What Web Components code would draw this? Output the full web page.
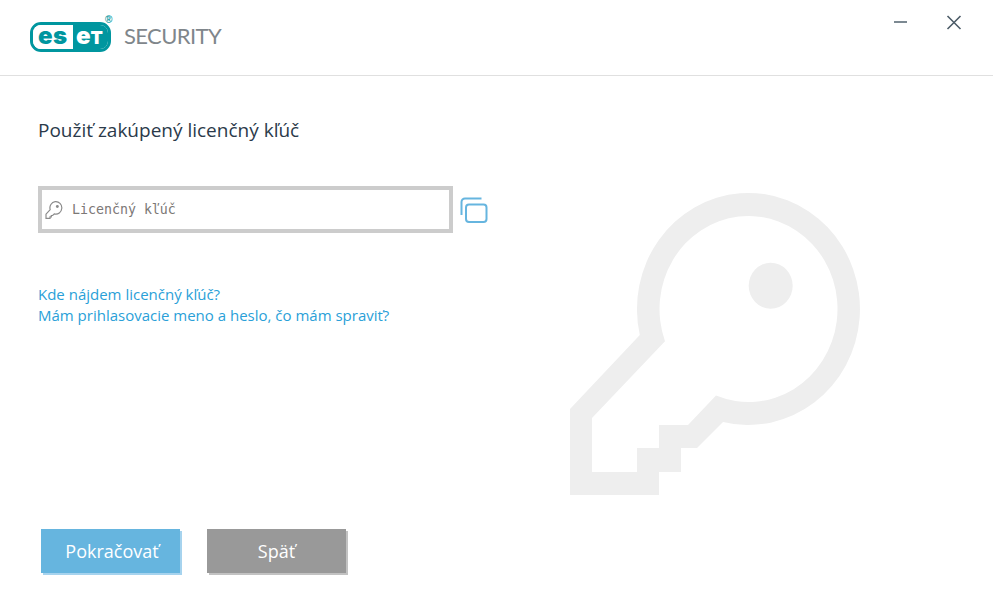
<!DOCTYPE html>
<html lang="sk">
<head>
<meta charset="utf-8">
<title>ESET Security</title>
<style>
  html, body { margin: 0; height: 100%; background: #fff; }
  body { font-family: "Open Sans", "Noto Sans", sans-serif; overflow: hidden; }
</style>
</head>
<body>
<license-page>
  <eset-header slot="header"></eset-header>
  <key-watermark slot="watermark"></key-watermark>
  <span slot="title">Použiť zakúpený licenčný kľúč</span>
  <license-field slot="field">Licenčný kľúč</license-field>
  <help-link slot="links">Kde nájdem licenčný kľúč?</help-link>
  <help-link slot="links">Mám prihlasovacie meno a heslo, čo mám spraviť?</help-link>
  <eset-button slot="actions" kind="primary">Pokračovať</eset-button>
  <eset-button slot="actions" kind="secondary">Späť</eset-button>
</license-page>

<script>
(function() {
  class LicensePage extends HTMLElement {
    constructor() {
      super();
      this.attachShadow({ mode: 'open' });
      this.shadowRoot.innerHTML = `
        <style>
          :host { display: block; position: relative; width: 993px; height: 616px; overflow: hidden; }
          main { display: flex; flex-direction: column; padding: 41px 0 0 38px; }
          h1 { margin: 0; font: 400 19px/26px "Open Sans", sans-serif; color: #2b3a4a; height: 26px; }
          .field { margin-top: 43px; }
          .links { display: flex; flex-direction: column; margin-top: 51px; }
          .actions { display: flex; gap: 27px; margin: 203px 0 0 3px; }
        </style>
        <slot name="watermark"></slot>
        <slot name="header"></slot>
        <main>
          <h1><slot name="title"></slot></h1>
          <div class="field"><slot name="field"></slot></div>
          <div class="links"><slot name="links"></slot></div>
          <div class="actions"><slot name="actions"></slot></div>
        </main>
      `;
    }
  }

  class EsetHeader extends HTMLElement {
    constructor() {
      super();
      this.attachShadow({ mode: 'open' });
      this.shadowRoot.innerHTML = `
        <style>
          :host { display: flex; align-items: flex-start; justify-content: space-between; height: 75px; border-bottom: 1px solid #e0e0e0; }
          .brand { display: flex; align-items: flex-start; margin: 22px 0 0 30px; position: relative; }
          .logo { display: flex; width: 81px; height: 30px; border-radius: 11px; overflow: hidden; box-sizing: border-box; border: 3px solid #00969f; font: 900 24px/21px Inter, "Liberation Sans", sans-serif; }
          .logo span { display: block; }
          .es { width: 40px; padding-left: 5px; box-sizing: border-box; color: #00969f; background: #fff; letter-spacing: .4px; }
          .et { flex: 1; padding-left: 3px; color: #fff; background: #00969f; }
          .et b { font-size: 18px; font-weight: 900; }
          .reg { position: absolute; left: 75px; top: -8px; font: 700 10px/12px "Liberation Sans", sans-serif; color: #00969f; }
          .name { margin: 0 0 0 13px; font: 400 22px/27px Lato, sans-serif; letter-spacing: -.6px; color: #7f868b; }
          .controls { display: flex; gap: 37px; margin: 15px 31px 0 0; }
          svg { display: block; }
        </style>
        <div class="brand">
          <div class="logo"><span class="es">es</span><span class="et">e<b>T</b></span></div>
          <span class="reg">®</span>
          <span class="name">SECURITY</span>
        </div>
        <div class="controls">
          <svg width="16" height="16" viewBox="0 0 16 16"><path d="M1 7h13" stroke="#5b6b76" stroke-width="1.6" fill="none"/></svg>
          <svg width="16" height="16" viewBox="0 0 16 16"><path d="M1.500 1l13 13M14.500 1l-13 13" stroke="#4d5c68" stroke-width="1.6" fill="none"/></svg>
        </div>
      `;
    }
  }

  class LicenseField extends HTMLElement {
    constructor() {
      super();
      this.attachShadow({ mode: 'open' });
      this.shadowRoot.innerHTML = `
        <style>
          :host { display: flex; align-items: center; gap: 7px; }
          .box { display: flex; align-items: center; gap: 9px; box-sizing: border-box; width: 415px; height: 47px; padding-left: 3px; border: 4px solid #ccc; background: #fff; }
          .text { font: 400 13.28px/16px "DejaVu Sans Mono", monospace; color: #7c7876; }
          svg { display: block; flex: none; }
        </style>
        <div class="box">
          <svg width="18" height="18" viewBox="570 193 290 302" fill="none" stroke="#8a8a8a" stroke-width="20">
            <path d="M651 339 581 413V484H648V460H670V436H693L720 408A100 104 0 1 0 651 339Z"/>
            <ellipse cx="771" cy="286" rx="24" ry="25" fill="#8a8a8a" stroke="none"/>
          </svg>
          <span class="text"><slot></slot></span>
        </div>
        <svg width="28" height="27" viewBox="0 0 28 27" fill="none" stroke="#66b5df" stroke-width="2">
          <path d="M21.500 2.500H5a3.500 3.500 0 0 0-3.500 3.500V19"/>
          <rect x="6" y="8.500" width="20.500" height="17.500" rx="3"/>
        </svg>
      `;
    }
  }

  class HelpLink extends HTMLElement {
    constructor() {
      super();
      this.attachShadow({ mode: 'open' });
      this.shadowRoot.innerHTML = `
        <style>
          :host { display: block; font: 400 15px/21px "Open Sans", sans-serif; color: #2a9fd8; cursor: pointer; }
        </style>
        <slot></slot>
      `;
    }
  }

  class EsetButton extends HTMLElement {
    static get observedAttributes() {
      return ['kind'];
    }

    constructor() {
      super();
      this.attachShadow({ mode: 'open' });
      this.shadowRoot.innerHTML = `
        <style>
          :host { display: flex; align-items: center; justify-content: center; box-sizing: border-box; width: 139px; height: 44px; font: 400 18px/24px "Open Sans", sans-serif; color: #fff; cursor: pointer; }
          :host([kind="primary"]) { background: #66b5df; box-shadow: 2px 2px 0 #a6d3ee; padding-left: 3px; }
          :host([kind="secondary"]) { background: #999; box-shadow: 2px 2px 0 #c2c2c2; }
        </style>
        <slot></slot>
      `;
    }
  }

  class KeyWatermark extends HTMLElement {
    constructor() {
      super();
      this.attachShadow({ mode: 'open' });
      this.shadowRoot.innerHTML = `
        <style>
          :host { display: block; position: absolute; left: 560px; top: 180px; width: 310px; height: 325px; pointer-events: none; }
          svg { display: block; }
        </style>
        <svg width="310" height="325" viewBox="560 180 310 325">
          <path fill="#eee" fill-rule="evenodd" d="M639.800 335 570 409V495H659V472H681V448H697L723 421.900A111.500 116 0 1 0 639.800 335ZM665 341.200 592 418V472H637V448H659V425H688L716 395.600A89 93 0 1 0 665 341.200Z"/>
          <ellipse cx="770.700" cy="285.700" rx="22" ry="23" fill="#eee"/>
        </svg>
      `;
    }
  }

  customElements.define('license-page', LicensePage);
  customElements.define('eset-header', EsetHeader);
  customElements.define('license-field', LicenseField);
  customElements.define('help-link', HelpLink);
  customElements.define('eset-button', EsetButton);
  customElements.define('key-watermark', KeyWatermark);
})();
</script>
</body>
</html>
